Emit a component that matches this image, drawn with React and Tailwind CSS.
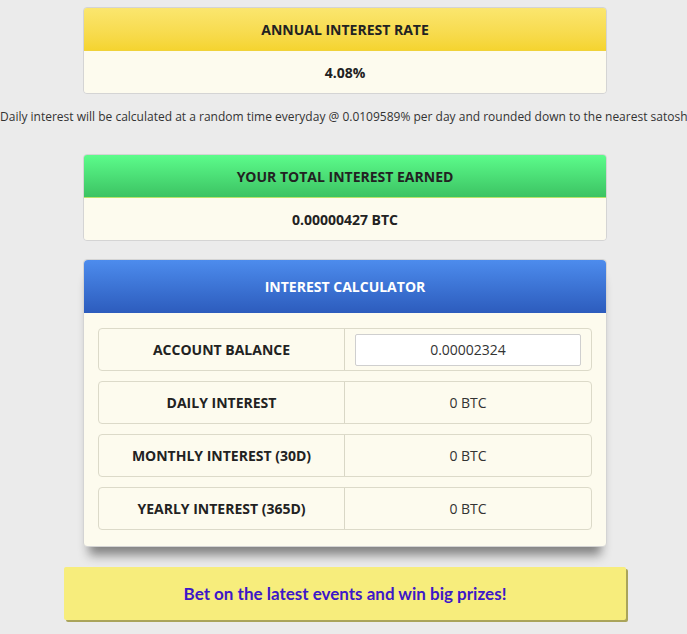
export default function App() {
  const rows = [
    { label: 'Daily Interest', value: '0 BTC' },
    { label: 'Monthly Interest (30D)', value: '0 BTC' },
    { label: 'Yearly Interest (365D)', value: '0 BTC' },
  ];

  return (
    <div className="min-h-screen w-full overflow-hidden bg-[#ebebeb] pt-[7px] pb-4 pl-[3px] font-['Open_Sans',sans-serif] text-[#222]">
      {/* ANNUAL RATE */}
      <div className="mx-auto w-[524px] overflow-hidden rounded-[4px] border border-[#d4d4d4]">
        <div className="flex h-[43px] items-center justify-center border-b border-[#f0d23a] bg-gradient-to-b from-[#fbe66e] to-[#f5d42f] text-[14px] font-bold uppercase">
          Annual Interest Rate
        </div>
        <div className="flex h-[42px] items-center justify-center bg-[#fdfbee] text-[14px] font-bold">4.08%</div>
      </div>

      <p className="-ml-[3px] mt-[14px] whitespace-nowrap text-center text-[12px] leading-[18px] text-[#333]">
        Daily interest will be calculated at a random time everyday @ 0.0109589% per day and rounded down to the nearest satoshi.
      </p>

      {/* TOTAL EARNED */}
      <div className="mx-auto mt-[28px] w-[524px] overflow-hidden rounded-[4px] border border-[#d4d4d4]">
        <div className="flex h-[43px] items-center justify-center border-b border-[#b9e36a] bg-gradient-to-b from-[#5cfc8b] to-[#3cc363] text-[14px] font-bold uppercase">
          Your Total Interest Earned
        </div>
        <div className="flex h-[42px] items-center justify-center bg-[#fdfbee] text-[14px] font-bold">0.00000427 BTC</div>
      </div>

      {/* CALCULATOR */}
      <div className="mx-auto mt-[18px] w-[524px] rounded-[4px] border border-[#d4d4d4] bg-[#fdfbee] shadow-[0_14px_10px_-6px_rgba(0,0,0,0.45)]">
        <div className="flex h-[53px] items-center justify-center rounded-t-[4px] bg-gradient-to-b from-[#4d8ced] to-[#2d5cbd] text-[14px] font-bold uppercase text-white">
          Interest Calculator
        </div>
        <div className="flex flex-col gap-[10px] px-[14px] pt-[15px] pb-[16px]">
          <div className="flex h-[43px] rounded-[4px] border border-[#dcdac9]">
            <div className="flex w-[246px] items-center justify-center border-r border-[#d9d7c6] text-[14px] font-bold uppercase">
              Account Balance
            </div>
            <div className="flex flex-1 items-center px-[10px]">
              <input
                readOnly
                value="0.00002324"
                className="h-[32px] w-full rounded-[2px] border border-[#cfcfcf] bg-white text-center text-[14px] text-[#333] outline-none"
              />
            </div>
          </div>
          {rows.map((r) => (
            <div key={r.label} className="flex h-[43px] rounded-[4px] border border-[#dcdac9]">
              <div className="flex w-[246px] items-center justify-center border-r border-[#d9d7c6] text-[14px] font-bold uppercase">
                {r.label}
              </div>
              <div className="flex flex-1 items-center justify-center text-[14px] text-[#333]">{r.value}</div>
            </div>
          ))}
        </div>
      </div>

      {/* PROMO BANNER */}
      <div className="mx-auto mt-[20px] flex h-[53px] w-[562px] items-center justify-center rounded-[2px] bg-[#f7ed7c] shadow-[2px_2px_0_#aaa45a] font-['Lato',sans-serif] text-[17px] font-bold text-[#3d17c8]">
        Bet on the latest events and win big prizes!
      </div>
    </div>
  );
}
